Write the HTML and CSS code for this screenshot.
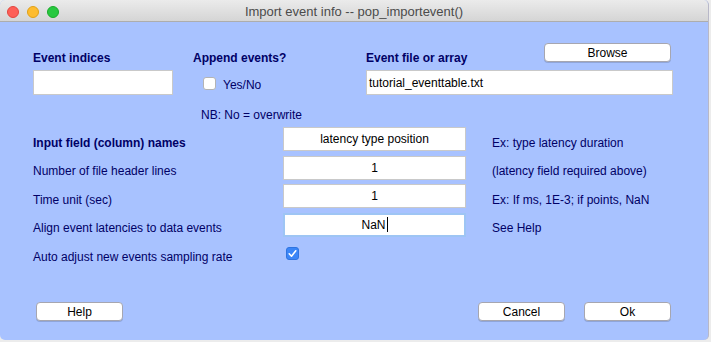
FILE: index.html
```html
<!DOCTYPE html>
<html lang="en">
<head>
    <meta charset="UTF-8">
    <meta name="viewport" content="width=device-width, initial-scale=1.0">
    <title>pop_importevent</title>
    <link rel="stylesheet" href="styles.css">
</head>
<body>
    <div class="window">
        <div class="titlebar">
            <div class="lights">
                <span class="light red"></span>
                <span class="light yellow"></span>
                <span class="light green"></span>
            </div>
            <div class="title">Import event info -- pop_importevent()</div>
        </div>

        <div class="content">
            <!-- top block: indices / append / file -->
            <div class="top">
                <div class="heading">Event indices</div>
                <div class="heading">Append events?</div>
                <div class="file-head">
                    <div class="heading">Event file or array</div>
                    <button class="btn browse">Browse</button>
                </div>

                <div class="field indices"></div>
                <label class="check-row">
                    <span class="check"></span>
                    <span class="text">Yes/No</span>
                </label>
                <div class="field left">tutorial_eventtable.txt</div>

                <div></div>
                <div class="text note">NB: No = overwrite</div>
                <div></div>
            </div>

            <!-- parameters -->
            <div class="fields">
                <div class="label bold">Input field (column) names</div>
                <div class="field center">latency type position</div>
                <div class="text hint">Ex: type latency duration</div>

                <div class="label">Number of file header lines</div>
                <div class="field center">1</div>
                <div class="text hint">(latency field required above)</div>

                <div class="label">Time unit (sec)</div>
                <div class="field center">1</div>
                <div class="text hint">Ex: If ms, 1E-3; if points, NaN</div>

                <div class="label">Align event latencies to data events</div>
                <div class="field center focus">NaN<span class="caret"></span></div>
                <div class="text hint">See Help</div>

                <div class="label">Auto adjust new events sampling rate</div>
                <div class="check-cell"><span class="check checked">
                    <svg viewBox="0 0 13 13" width="13" height="13"><path d="M3.2 6.8 L5.5 9.2 L9.8 3.8" fill="none" stroke="#fff" stroke-width="1.6" stroke-linecap="round" stroke-linejoin="round"/></svg>
                </span></div>
                <div></div>
            </div>

            <div class="buttons">
                <button class="btn help">Help</button>
                <div class="spacer"></div>
                <button class="btn">Cancel</button>
                <button class="btn">Ok</button>
            </div>
        </div>
    </div>
</body>
</html>
```

FILE: styles.css
```css
/* base */
* {
    margin: 0;
    padding: 0;
    box-sizing: border-box;
}

body {
    width: 711px;
    height: 342px;
    background-color: #ececec;
    font-family: 'Liberation Sans', Arial, sans-serif;
    font-size: 12px;
    line-height: 14px;
    overflow: hidden;
}

/* window frame */
.window {
    width: 709px;
    height: 340px;
    background-color: #a8c2ff;
    border-radius: 5px;
    border-right: 1px solid #b8b8c8;
    overflow: hidden;
}

.titlebar {
    position: relative;
    height: 22px;
    background: linear-gradient(#ebebeb, #d5d5d5);
    border-bottom: 1px solid #adadad;
    display: flex;
    align-items: center;
    justify-content: center;
}

.lights {
    position: absolute;
    left: 7px;
    top: 6px;
    display: flex;
    gap: 8px;
}

.light {
    width: 12px;
    height: 12px;
    border-radius: 50%;
}

.red { background: #fe5f57; border: 1px solid #e2463f; }
.yellow { background: #febc2e; border: 1px solid #e1a116; }
.green { background: #28c840; border: 1px solid #1aab29; }

.title {
    font-size: 13px;
    color: #4b4b4b;
    padding-top: 2px;
}

/* content */
.content {
    padding: 21px 0 0 33px;
}

.text,
.heading,
.label {
    color: #000066;
}

.heading,
.bold {
    font-weight: bold;
}

.top {
    display: grid;
    grid-template-columns: 160px 173px 307px;
    grid-template-rows: 21px 25px auto;
    row-gap: 6px;
}

.top .heading {
    align-self: end;
    margin-bottom: -1px;
}

.file-head {
    display: flex;
    justify-content: space-between;
    align-items: flex-end;
}

.browse {
    align-self: flex-start;
    margin-right: 2px;
}

.field {
    height: 25px;
    background: #fff;
    border: 1px solid #c9c9c9;
    color: #000;
    display: flex;
    align-items: center;
    padding: 0 2px;
    white-space: nowrap;
}

.field.indices {
    width: 140px;
}

.field.center {
    justify-content: center;
    height: 24px;
}

.field.focus {
    border: 2px solid #9ec5f4;
}

.caret {
    display: inline-block;
    width: 1px;
    height: 15px;
    background: #000;
    margin-left: 1px;
}

.check-row {
    display: flex;
    align-items: center;
    gap: 7px;
    padding: 1px 0 0 10px;
}

.check-row .text {
    padding-top: 3px;
}

.check {
    width: 13px;
    height: 13px;
    border-radius: 3px;
    background: #fff;
    border: 1px solid #b4b4b4;
    display: flex;
}

.check.checked {
    background: #3b86f7;
    border-color: #2f74e0;
}

.check.checked svg {
    margin: -1px;
}

.note {
    padding: 7px 0 0 8px;
}

/* parameter rows */
.fields {
    display: grid;
    grid-template-columns: 250px 183px auto;
    grid-auto-rows: 24px;
    row-gap: 4.5px;
    margin-top: 5px;
}

.label,
.hint {
    align-self: center;
    padding-top: 7px;
}

.hint {
    padding-left: 26px;
}

.check-cell {
    display: flex;
    align-items: center;
    padding-left: 3px;
}

/* buttons */
.buttons {
    display: flex;
    align-items: center;
    margin-top: 37px;
    padding-left: 3px;
    width: 638px;
    gap: 19px;
}

.spacer {
    flex: 1;
}

.btn {
    width: 87px;
    height: 19px;
    background: #fff;
    border: 1px solid #a6a6b0;
    border-radius: 4px;
    box-shadow: 0 1px 0 rgba(0, 0, 0, 0.15);
    font-family: 'Liberation Sans', Arial, sans-serif;
    font-size: 12px;
    color: #000;
}

.browse {
    width: 127px;
}
```
